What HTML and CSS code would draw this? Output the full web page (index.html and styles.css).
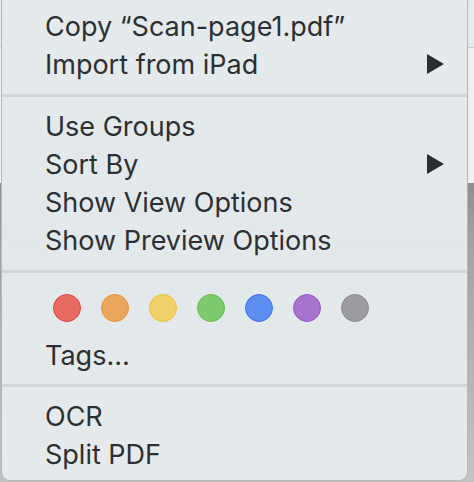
FILE: index.html
```html
<!DOCTYPE html>
<html>
<head>
<meta charset="utf-8">
<link rel="stylesheet" href="styles.css">
</head>
<body>
<div class="menu">
  <div class="group g1">
    <div class="item"><span>Copy “Scan-page1.pdf”</span></div>
    <div class="item"><span>Import from iPad</span><svg class="arrow" width="17" height="20" viewBox="0 0 17 20"><polygon points="0,0 17,10 0,20" /></svg></div>
  </div>
  <div class="sep"></div>
  <div class="group g2">
    <div class="item"><span>Use Groups</span></div>
    <div class="item"><span>Sort By</span><svg class="arrow" width="17" height="20" viewBox="0 0 17 20"><polygon points="0,0 17,10 0,20" /></svg></div>
    <div class="item"><span>Show View Options</span></div>
    <div class="item"><span>Show Preview Options</span></div>
  </div>
  <div class="sep"></div>
  <div class="group g3">
    <div class="dots">
      <span class="dot red"></span>
      <span class="dot orange"></span>
      <span class="dot yellow"></span>
      <span class="dot green"></span>
      <span class="dot blue"></span>
      <span class="dot purple"></span>
      <span class="dot gray"></span>
    </div>
    <div class="item"><span>Tags…</span></div>
  </div>
  <div class="sep"></div>
  <div class="group g4">
    <div class="item"><span>OCR</span></div>
    <div class="item"><span>Split PDF</span></div>
  </div>
</div>
</body>
</html>
```
FILE: styles.css
```css
html, body {
  margin: 0;
  padding: 0;
}
body {
  width: 474px;
  height: 482px;
  overflow: hidden;
  background: linear-gradient(to bottom, #e7ebed 0, #e7ebed 47px, #c9cccd 47px, #c9cccd 48px, #f1f1f1 48px, #f1f1f1 183px, #8e8e8e 183px, #a4a4a4 250px, #c2c2c2 482px);
  font-family: Inter, "Noto Sans", sans-serif;
}
.menu {
  margin-left: 1px;
  width: 467px;
  box-sizing: border-box;
  border: 1px solid #b4b8ba;
  border-top: none;
  border-radius: 0 0 9px 9px;
  background: linear-gradient(to bottom, #e5eaec, #e3e8ea 50%, #e6eaec);
  display: flex;
  flex-direction: column;
  color: #2c3032;
}
.group {
  display: flex;
  flex-direction: column;
}
.g1 { padding: 7px 0 11px; }
.g2 { padding: 10px 0 11px; }
.g3 { padding: 21px 0 10px; }
.g4 { padding: 10px 0 7px; }
.sep {
  height: 3px;
  background: #d1d7d9;
}
.item {
  height: 38px;
  display: flex;
  align-items: center;
  justify-content: space-between;
  padding: 0 23px 0 43px;
  font-size: 27px;
  letter-spacing: 0;
}
.arrow {
  fill: #2a2e30;
  display: block;
}
.dots {
  display: flex;
  gap: 20px;
  padding-left: 51px;
  height: 28px;
  margin-bottom: 14px;
}
.dot {
  width: 28px;
  height: 28px;
  box-sizing: border-box;
  border-radius: 50%;
  border: 1.5px solid;
}
.red { background: #e86b61; border-color: #e1463b; }
.orange { background: #eca55d; border-color: #e99436; }
.yellow { background: #f0d068; border-color: #f0c33d; }
.green { background: #7ecb6f; border-color: #5dc14c; }
.blue { background: #5c8ef2; border-color: #3b79f0; }
.purple { background: #a674cc; border-color: #9a5bc8; }
.gray { background: #9c9b9f; border-color: #8d8c91; }
```
